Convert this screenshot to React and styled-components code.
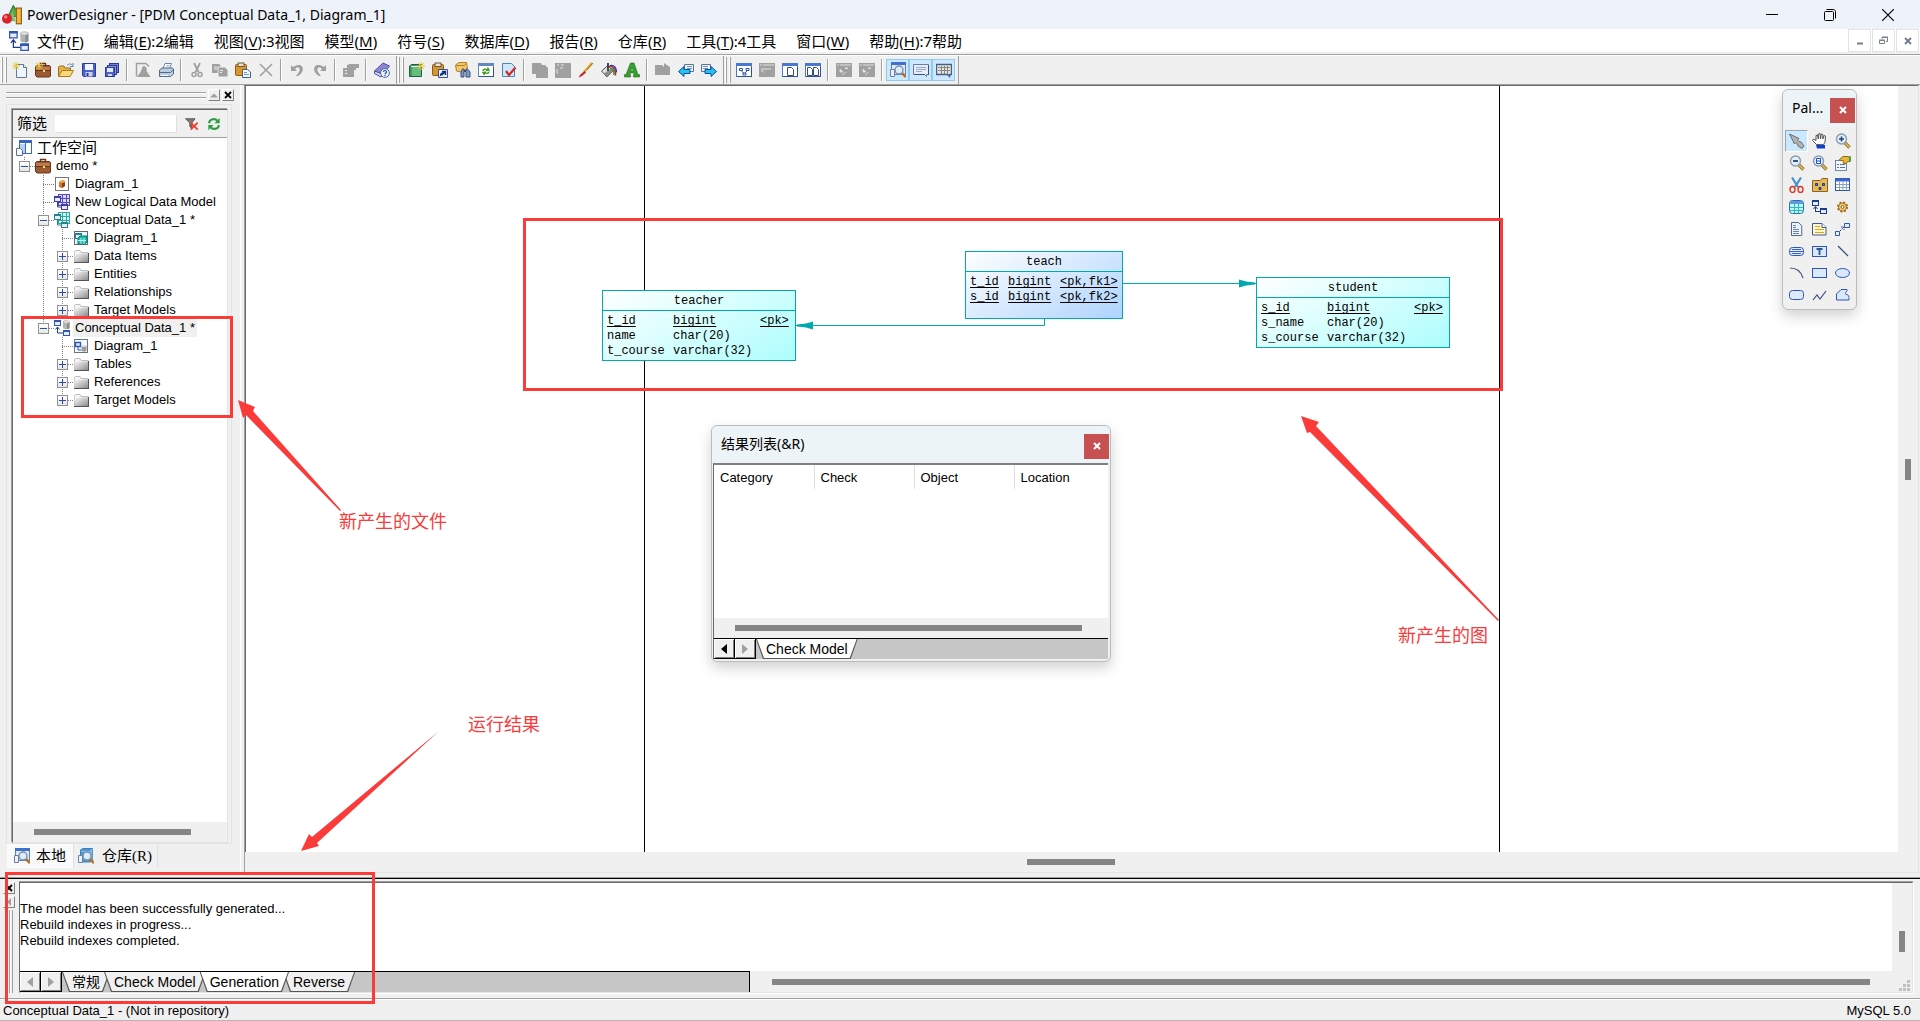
import React from 'react';
import styled, { createGlobalStyle, css } from 'styled-components';

const ARIAL = '"Liberation Sans", "Noto Sans CJK SC", sans-serif';
const SEGOE = '"Noto Sans", "Noto Sans CJK SC", sans-serif';
const SONG = '"Liberation Serif", "Noto Sans CJK SC", serif';
const MONO = '"Liberation Mono", "Noto Sans CJK SC", monospace';

/* ---------- icons ---------- */

const G = '#a0a0a0';
const B = '#2f55b5';
const N = '#1d3c8f';

const star = (
  <path d="M4 0v8M0 4h8M1 1l6 6M7 1l-6 6" stroke="#e8c53a" strokeWidth="1" />
);

const glass = (x, y) => (
  <>
    <path d={`M${x + 3} ${y + 3}l4 4`} stroke="#b5702c" strokeWidth="2.6" />
    <circle cx={x} cy={y} r="4" fill="#dcecfb" stroke="#7e8fa8" strokeWidth="1.4" />
  </>
);

const windowBox = (color = '#4a78d0') => (
  <>
    <rect x="0.5" y="1.5" width="15" height="13" fill="#fff" stroke={color} />
    <rect x="1" y="1" width="14" height="3" fill={color} />
    <path d="M1 14.5h15M15.5 5v10" stroke="#33528f" />
  </>
);

const page = (
  <>
    <path d="M4.5 2.5h7l3 3v10h-10z" fill="#eef5fc" stroke="#5f7893" />
    <path d="M11.5 2.5v3h3" fill="#fff" stroke="#5f7893" />
  </>
);

const clipboard = (
  <>
    <rect x="0.5" y="2.5" width="11" height="11" rx="1" fill="#d9962c" stroke="#8c5a1b" />
    <rect x="3" y="1" width="6" height="3.5" fill="#e9e2d0" stroke="#6f5a3a" />
  </>
);

const briefcase = (
  <>
    <path d="M5.5 4V1.5h5V4" fill="none" stroke="#6d3414" strokeWidth="1.4" />
    <path d="M0.5 4.5L2 3.5h12.5l1 1V14l-1 1H2l-1.5-1.5z" fill="#9c5a32" stroke="#6a3517" />
    <path d="M1 8.5h14" stroke="#6a3517" />
    <path d="M1 5h14v3H1z" fill="#b97a4c" />
    <rect x="8" y="8" width="2" height="2" fill="#f0d66c" />
  </>
);

const smallBox = (x, y, c) => (
  <>
    <rect x={x + 0.5} y={y + 0.5} width="6" height="5" fill="#e4eeff" stroke={c} />
    <path d={`M${x} ${y + 1}h7`} stroke={c} strokeWidth="2" />
  </>
);

const lens = (
  <>
    <path d="M9.5 9.5l5 5" stroke="#7d6428" strokeWidth="3.2" />
    <path d="M9.5 9.5l5 5" stroke="#d9b04c" strokeWidth="2" />
    <circle cx="6.5" cy="6" r="5" fill="#e2effc" stroke="#8b9bb0" strokeWidth="1.4" />
  </>
);

const ICONS = {
  app: (
    <>
      <path d="M9 0.5L14.5 9H5z" fill="#58a84a" stroke="#357f2e" />
      <rect x="11.5" y="2.5" width="4" height="12.5" fill="#f6b63a" stroke="#93641a" />
      <path d="M8 4l3 9H7z" fill="#7cc36b" />
      <circle cx="4" cy="11" r="4" fill="#d8232a" />
      <circle cx="3" cy="9.5" r="1.3" fill="#f58a86" />
    </>
  ),
  pdm: (
    <>
      {smallBox(0, 0, B)}
      {smallBox(9, 10, B)}
      <path d="M9 2v6c0 1.5 6.500 1.500 6.500 0V2z" fill="#b4b4b4" />
      <path d="M13 2v7c1 0 2.500-.4 2.500-1V2z" fill="#8b8b8b" />
      <ellipse cx="12.200" cy="2" rx="3.200" ry="1.400" fill="#e2e2e2" stroke="#999" strokeWidth="0.500" />
      <path d="M3.500 7v6H9M1.500 9.500l2-2.500 2 2.500" fill="none" stroke={N} />
    </>
  ),
  newFile: <>{page}{star}</>,
  newProject: <>{briefcase}{star}</>,
  open: (
    <>
      <path d="M0.500 14.500V5l1-1H6l1 2h5.500v2" fill="#e6b44a" stroke="#9a6d18" />
      <path d="M0.500 14.500L4 8.500h11.500l-3.500 6z" fill="#fbd87d" stroke="#a97b20" />
      <path d="M9 3.500c2-2 4-2 5.500 0M15 1v3.500h-3" fill="none" stroke="#5a84b8" />
    </>
  ),
  save: (
    <>
      <path d="M1.500 1.500h13v13h-12l-1-1z" fill="#4f63c6" stroke="#2c3b97" />
      <rect x="4" y="2" width="8" height="6" fill="#f1f5ff" />
      <rect x="4.500" y="10" width="7" height="4.500" fill="#c9d3ee" />
      <rect x="5.500" y="11" width="2" height="3" fill="#2c3b97" />
    </>
  ),
  saveAll: (
    <>
      <rect x="5.500" y="1.500" width="9" height="9" fill="#7280cf" stroke="#2c3b97" />
      <rect x="3.500" y="3.500" width="9" height="9" fill="#8b96dc" stroke="#2c3b97" />
      <rect x="1.500" y="5.500" width="9" height="9" fill="#4f63c6" stroke="#2c3b97" />
      <rect x="3" y="6" width="6" height="4" fill="#dfe6ff" />
      <rect x="4" y="12" width="4" height="2" fill="#c9d3ee" />
    </>
  ),
  preview: (
    <>
      <path d="M1.500 14.500V1.500h9.500l3 3" fill="none" stroke={G} strokeWidth="1.500" />
      <path d="M8 4a3.500 3.500 0 013.500 5l4 6H2l3.500-5z" fill={G} />
    </>
  ),
  print: (
    <>
      <path d="M5 6.500L7 1.500h6.500l-2 5z" fill="#fff" stroke="#6d89a8" />
      <path d="M1.500 8L4 6h10.500l1 1v5l-3 2.500h-11z" fill="#b9cce0" stroke="#4f6b8c" />
      <path d="M2 10.500h10.500L15 8" fill="none" stroke="#4f6b8c" />
      <path d="M3 13.500h7" stroke="#fff" />
      <path d="M8.500 3.500h3M8 5h3" stroke="#8aa3bf" strokeWidth="0.700" />
    </>
  ),
  cutGrey: (
    <>
      <path d="M5 1l4.500 9M11 1L6.500 10" stroke={G} strokeWidth="1.800" />
      <circle cx="5" cy="12.500" r="2" fill="none" stroke={G} strokeWidth="1.500" />
      <circle cx="11" cy="12.500" r="2" fill="none" stroke={G} strokeWidth="1.500" />
    </>
  ),
  copyGrey: (
    <>
      <path d="M0 2h7l2 2v7H0z" fill={G} />
      <path d="M6 5h7l3 3v7H6z" fill={G} stroke="#f0f0f0" />
      <path d="M2 5h3M2 7h3M8 8.500h3M8 10.500h2" stroke="#f0f0f0" />
    </>
  ),
  paste: (
    <>
      {clipboard}
      <path d="M7.500 7.500h5l3 2.500v5.500h-8z" fill="#f2f7fd" stroke="#44648c" />
      <path d="M9 10.500h3M9 12.500h5" stroke="#7c97b8" />
    </>
  ),
  delGrey: <path d="M2 2l12 12M14 2L2 14" stroke={G} strokeWidth="1.600" />,
  undo: <path d="M2 3v6h6L6 7c3-3 6-1 4 3l-3 4h2c7-4 6-12 0-11-2 0-3 1-5 2z" fill={G} />,
  redo: <path d="M14 3v6H8l2-2C7 4 4 6 6 10l3 4H7C0 10 1 2 7 3c2 0 3 1 5 2z" fill={G} />,
  propsGrey: (
    <>
      <path d="M0 6h4V3l3-1h9v4h-3v2h-2v7H0z" fill={G} />
      <path d="M2 8.500h2M2 11.500h2" stroke="#f0f0f0" />
    </>
  ),
  help: (
    <>
      <path d="M0.500 9L9 1l6.500 3L8 12z" fill="#8d86cf" stroke="#554b9e" />
      <path d="M0.500 9v2.500L7 15l1-3z" fill="#dcd8f2" stroke="#554b9e" />
      <circle cx="11" cy="11" r="4.400" fill="#f3f7ff" stroke="#4169b8" />
      <path d="M9.500 10c0-2 3-2 3 0 0 1-1.500 1-1.500 2.200M11 13v1" fill="none" stroke="#26488f" strokeWidth="1.200" />
    </>
  ),
  newModel: (
    <>
      <path d="M0.500 4l2-1.500h10V14.500h-12z" fill="#3f9b5c" stroke="#245f3d" />
      <rect x="3" y="5" width="9" height="9" fill="#67bd7c" />
      <path d="M2 4.500h10" stroke="#e8f5ea" />
      <g transform="translate(8 0)">{star}</g>
    </>
  ),
  pasteLink: (
    <>
      {clipboard}
      <path d="M6.500 7.500h9v8h-9z" fill="#eaf1fb" stroke="#35548f" />
      <path d="M8.500 14c0-2 1-3 3-3M10 9.500h3.500V13M13.500 9.500L10 13" fill="none" stroke="#142f7a" strokeWidth="1.400" />
    </>
  ),
  find: (
    <>
      <path d="M0.500 3L4 0.500h7.500l1 6-4 4-7-1.500z" fill="#f2c763" stroke="#b28327" />
      <path d="M1 3.500h8l3-2.500" fill="none" stroke="#b28327" />
      <path d="M6 15V10l1.500-3H9v8zM11 15V7h1.500L15 10v5z" fill="#7f98c0" stroke="#35507f" />
      <path d="M9 9h2" stroke="#35507f" strokeWidth="2" />
    </>
  ),
  refreshWin: (
    <>
      {windowBox('#5f8ac0')}
      <path d="M5 9c0-2 3-2.500 5-1M11 9.500c0 2-3 2.500-5 1M9.500 5.500l1.500 2.500-3 .5M6.500 13L5 10.500l3-.5" fill="none" stroke="#3f9a22" strokeWidth="1.400" />
    </>
  ),
  check: (
    <>
      <path d="M1.500 1.500h9l3 3v10h-12z" fill="#cfe7f8" stroke="#4b86b5" />
      <path d="M5 9l3 4L14.500 5.500" fill="none" stroke="#cf2a2a" strokeWidth="2.200" />
    </>
  ),
  grey1: <path d="M0 1h9l1 2h3l3 3v10H4v-4H0z" fill={G} />,
  grey2: (
    <>
      <path d="M0 1h16v15H0z" fill={G} />
      <path d="M2 3h2M2 7v4h1M5 6h3M6 3h3" fill="none" stroke="#e2e2e2" />
    </>
  ),
  brush: (
    <>
      <path d="M14 1L6 10" stroke="#e4a72d" strokeWidth="2.200" />
      <path d="M15 1l-6 7" stroke="#8b5c12" strokeWidth="0.800" />
      <path d="M6.500 9L2 13l-1.500 2.500L4 14l4-3.500z" fill="#c1221d" />
    </>
  ),
  bucket: (
    <>
      <path d="M0.500 9L7 3.500 12 9l-6 6z" fill="#e0e0e0" stroke="#555" />
      <path d="M3 11.500l7-5L12 9l-6 6z" fill="#8d8d8d" />
      <path d="M7 9V1" stroke="#223" strokeWidth="1.600" />
      <path d="M8 4.500c4-1 6.500 2 6.500 9" fill="none" stroke="#d92020" strokeWidth="1.600" />
      <path d="M9 6c3 0 4 3 4 7" fill="none" stroke="#2aa12a" strokeWidth="1.400" />
      <path d="M9 3.500c4-1 6.500 2 6.500 7" fill="none" stroke="#2434d8" strokeWidth="1.200" />
    </>
  ),
  fontA: (
    <path
      d="M6.500 1h3.500l4 11.500h1.500V15h-6v-2.500h1l-.5-1.500H6l-.5 1.500h1V15H.5v-2.500H2zM8 5.500L6.800 9h2.600z"
      fill="#35a02c"
      stroke="#1e6b1a"
      strokeWidth="0.600"
      fillRule="evenodd"
    />
  ),
  greyFolder: <path d="M0 3h7l2 2V1l6 4v8H0z" fill={G} />,
  back: (
    <>
      <path d="M6.500 2.500h9v7h-9z" fill="#eef4fc" stroke="#5b7396" />
      <path d="M9 4.500h5M9 6.500h5" stroke="#7c94b4" />
      <path d="M0.500 9.500L6 4.500V7.500h6v4H6v3z" fill="#22c4ee" stroke="#0a4fa8" />
    </>
  ),
  forward: (
    <>
      <path d="M0.500 2.500h9v7h-9z" fill="#eef4fc" stroke="#5b7396" />
      <path d="M2 4.500h5M2 6.500h5" stroke="#7c94b4" />
      <path d="M15.500 9.500L10 4.500V7.500H4v4h6v3z" fill="#22c4ee" stroke="#0a4fa8" />
    </>
  ),
  winDiagram: (
    <>
      {windowBox()}
      <path d="M3.500 6.500h3v2h-3zM10 6.500h3v2h-3zM7 11h3v2H7zM5 8.500l3 3M11.500 8.500L9 11" fill="none" stroke={B} />
    </>
  ),
  greyWin: (
    <>
      <path d="M0 1h16v14H0z" fill={G} />
      <path d="M1 3h2M4 3h11M3 6v4M4 7h8M4 10h1" stroke="#e2e2e2" />
    </>
  ),
  winPage: <>{windowBox()}<path d="M5.500 5.500h4l2 2v6h-6z" fill="#fff" stroke="#344f7c" /></>,
  winPages: (
    <>
      {windowBox()}
      <path d="M2.500 5.500h3l2 2v6h-5zM8.500 5.500h3l2 2v6h-5z" fill="#fff" stroke="#344f7c" />
    </>
  ),
  greyExp: (
    <>
      <path d="M0 1h16v14H0z" fill={G} />
      <path d="M1 3h2M4 3h11" stroke="#e2e2e2" />
      <path d="M4 7v3h3zM12 6h-3l2 1zM6 13l4-3" fill="#e2e2e2" stroke="#e2e2e2" strokeWidth="0.800" />
    </>
  ),
  browser: (
    <>
      <rect x="1.500" y="0.500" width="14" height="12" fill="#dfeaf9" stroke="#5c80c0" />
      <rect x="1" y="0" width="15" height="3" fill="#3f6fd0" />
      {glass(9, 8)}
      <path d="M0.500 7.500h4v7h-4z" fill="#eaf1fb" stroke="#6a81a0" />
    </>
  ),
  output: (
    <>
      <path d="M0.500 2.500h15v10h-2v2l-2-2h-11z" fill="#e6edf8" stroke="#6b7ea2" />
      <path d="M3 5.500h10M3 7.500h10M3 9.500h6" stroke="#9aaac4" />
      <path d="M1 12.500h11M15.500 3v10" stroke="#3f5379" />
    </>
  ),
  grid: (
    <>
      <path d="M0.500 2.500h15v10h-2v2l-2-2h-11z" fill="#e6e4dc" stroke="#4a5f88" strokeWidth="1.400" />
      <path d="M2 5.500h12M2 8.500h12M5.500 4v8M8.500 4v8M11.500 4v8" stroke="#858585" />
    </>
  ),
  funnel: (
    <>
      <path d="M0.500 2h11L8 6.500V13L5.500 11V6.500z" fill="#7d7d7d" stroke="#4f4f4f" />
      <path d="M6.500 6.500l8 8M14.500 6.500l-8 8" stroke="#f0432a" strokeWidth="2.200" />
    </>
  ),
  refresh: (
    <>
      <path d="M2.500 7c0-5 7-6 9.500-2.500M13.500 9c0 5-7 6-9.500 2.500" fill="none" stroke="#2f9b45" strokeWidth="2.400" />
      <path d="M14.500 1v6h-6zM1.500 15V9h6z" fill="#2f9b45" />
    </>
  ),
  workspace: (
    <>
      <rect x="3.500" y="0.500" width="12" height="13" fill="#fff" stroke="#3566c8" />
      <path d="M3 1.500h13" stroke="#3566c8" strokeWidth="3" />
      <path d="M9.500 3v10" stroke="#3566c8" />
      <path d="M4 4h5v9H4z" fill="#b9d0f5" />
      <path d="M0.500 8.500h4l2 2v5h-6z" fill="#f7f9fc" stroke="#5e708c" />
    </>
  ),
  project: briefcase,
  projDiagram: (
    <>
      <rect x="1.500" y="1.500" width="13" height="13" fill="#fff" stroke="#777" />
      <path d="M5 6l3-2 3 1v5l-3 2-3-1z" fill="#d8742a" />
      <path d="M8 7h3v3l-3 2z" fill="#8a4316" />
      <path d="M5 6l3-2 3 1-3 2z" fill="#f3ab4a" />
    </>
  ),
  ldm: (
    <>
      <rect x="4.500" y="0.500" width="11" height="11" fill="#dcd9f8" stroke="#5549c0" />
      <path d="M8.500 0v12M12.500 0v12M4 4.500h12M4 8.500h12" stroke="#5549c0" />
      {smallBox(0, 2, '#4338a8')}
      {smallBox(7, 10, '#4338a8')}
      <path d="M3.500 8v5H7" fill="none" stroke="#4338a8" />
    </>
  ),
  cdm: (
    <>
      <rect x="4.500" y="0.500" width="11" height="11" fill="#d4f6f2" stroke="#2aa9a5" />
      <path d="M8.500 0v12M12.500 0v12M4 4.500h12M4 8.500h12" stroke="#2aa9a5" />
      {smallBox(0, 2, '#2b8288')}
      {smallBox(7, 10, '#2b8288')}
      <path d="M3.500 8v5H7" fill="none" stroke="#2b8288" />
    </>
  ),
  cdmDiagram: (
    <>
      <rect x="1.500" y="1.500" width="13" height="13" fill="#e7f8f8" stroke="#667" />
      {smallBox(2, 3, '#2b8288')}
      <path d="M5 8l2-2h7v6l-2 2H5z" fill="#19bdb4" stroke="#0c7772" />
      <path d="M5 10.500h8M8 8v6M11 8v6" stroke="#bff4ee" />
    </>
  ),
  folder: (
    <>
      <path d="M1.500 13.500V3.500l1-1H7l1 2h7v9z" fill="#f4f4f4" stroke="#bdbdbd" />
      <path d="M1.500 14V5.500h14V14z" fill="url(#folderShade)" />
      <path d="M1 14.500h15M15.500 5v10" stroke="#555" />
    </>
  ),
  pdmDiagram: (
    <>
      <rect x="1.500" y="1.500" width="13" height="13" fill="#f6f9fd" stroke="#677" />
      <rect x="2.500" y="4.500" width="5" height="4" fill="#dbe6fb" stroke={B} strokeWidth="1.400" />
      <path d="M5 8.500V12h3" fill="none" stroke={B} />
      <path d="M8.500 8v4.500c0 1.500 5 1.500 5 0V8z" fill="#9c9c9c" />
      <ellipse cx="11" cy="8" rx="2.500" ry="1" fill="#ddd" />
    </>
  ),
  repo: (
    <>
      <path d="M2.500 2L5 0.500h9.500V12l-2 2h-10z" fill="#4c96cf" stroke="#3a80b8" />
      <path d="M13.500 1v12" stroke="#7db8e2" strokeWidth="2" />
      <path d="M3 3.500h10" stroke="#8cc0e8" />
      {glass(9, 8)}
      <path d="M0.500 7.500h4v7h-4z" fill="#eaf1fb" stroke="#6a81a0" />
    </>
  ),
  pointer: <path d="M0.500 1L10 5.500 8.500 7l1.500 1.500 2 .5 3 4-2 2.500-4-2.500-.5-2L7 9.500 5.500 11z" fill="#b4b4b4" stroke="#6b6b6b" />,
  hand: (
    <>
      <path d="M4.500 11.500L0.500 7.500l1-1.500L4 7.500V2.500L5.500 2l.8 4V1L8 .5 8.500 6l.8-5 1.500.5v4.500l1.200-3.500 1.500.7-.5 6-1.500 2.500z" fill="#fff" stroke="#444" strokeWidth="0.900" />
      <path d="M4 12h9v3.500H5z" fill="#0a3fd0" />
    </>
  ),
  zoomIn: <>{lens}<path d="M4 6h5M6.500 3.500v5" stroke="#24406e" strokeWidth="1.600" /></>,
  zoomOut: <>{lens}<path d="M4 6h5" stroke="#24406e" strokeWidth="1.800" /></>,
  zoomFit: <>{lens}<path d="M4.500 3.500h4v5h-4zM4.500 6h4" fill="#fff" stroke="#2050c8" /></>,
  props: (
    <>
      <rect x="0.500" y="5.500" width="11" height="10" fill="#f3f7fc" stroke="#7186a5" />
      <path d="M2 9.500h2M5 9.500h5M2 12.500h2M5 12.500h5" stroke="#5473a8" />
      <path d="M4 5l4-3.500h5l3 1V6l-4 1-2 2-2-1 1-2z" fill="#e5b93a" stroke="#8e6b14" />
      <path d="M14 1.500h2V6h-2z" fill="#3f9c48" />
    </>
  ),
  scissors: (
    <>
      <path d="M3 0.500l6 9.500M12 0.500L6 10" stroke="#3f94d4" strokeWidth="2.200" />
      <ellipse cx="3.500" cy="12.500" rx="2.500" ry="3" fill="none" stroke="#e0331f" strokeWidth="1.400" />
      <ellipse cx="11.500" cy="12.500" rx="2.500" ry="3" fill="none" stroke="#e0331f" strokeWidth="1.400" />
    </>
  ),
  pkg: (
    <>
      <path d="M0.500 14.500V3.500h8l1.500-2h5.500v13z" fill="#e8b955" stroke="#8d6420" />
      <path d="M3.500 6.500h2v2h-2zM10.500 6.500h2v2h-2zM7 10.500h2v2H7z" fill="#4a7de0" stroke={N} />
    </>
  ),
  table: (
    <>
      <rect x="0.500" y="1.500" width="14" height="12" fill="#fff" stroke={B} />
      <path d="M1 3h13" stroke="#3b66cc" strokeWidth="3" />
      <path d="M1 7.500h13M1 10.500h13M4.500 5v8M8 5v8M11.500 5v8" stroke="#8aa2c8" />
    </>
  ),
  view: (
    <>
      <rect x="0.500" y="1.500" width="14" height="13" rx="3" fill="#b9fbf7" stroke="#2b6fae" />
      <path d="M1 5V4c0-1 1-2 2-2h9c1 0 2 1 2 2v1z" fill="#5f97dd" />
      <path d="M1 8.500h13M1 11.500h13M5.500 5v9M9.500 5v9" stroke="#36b3bb" />
    </>
  ),
  reference: (
    <>
      {smallBox(0, 1, N)}
      {smallBox(8, 9, N)}
      <path d="M3.500 13V8M1.500 10l2-2.500 2 2.500M3.500 12.500H8" fill="none" stroke={N} />
    </>
  ),
  gear: (
    <>
      <circle cx="7.500" cy="8" r="4.700" fill="none" stroke="#a06b1c" strokeWidth="1.800" strokeDasharray="2 1.700" />
      <circle cx="7.500" cy="8" r="4" fill="#f6cf7e" stroke="#a06b1c" strokeWidth="1" />
      <circle cx="7.500" cy="8" r="1.500" fill="#fff" stroke="#8a5a14" />
    </>
  ),
  file: (
    <>
      <path d="M2.500 1.500h7l3 3v10h-10z" fill="#eef4fb" stroke="#546a86" />
      <path d="M4 4.500h3M4 6.500h3M4 8.500h6M4 10.500h6M4 12.500h6" stroke="#6a83a5" />
      <path d="M13 5v10" stroke="#9fb2c8" />
    </>
  ),
  note: (
    <>
      <path d="M0.500 2.500h9.500l4 4v7.500H0.500z" fill="#fff6c8" stroke="#3e5a9e" />
      <path d="M10 2.500v4h4" fill="#fff" stroke="#3e5a9e" />
      <path d="M3 5.500h5M3 8.500h9M3 11.500h9" stroke="#d9a72e" />
    </>
  ),
  link: (
    <>
      <path d="M0.500 10.500h4v4h-4zM9.500 2.500h5v4h-5z" fill="#e9f1ff" stroke={B} />
      <path d="M5 10l4-4M6 6h3v3" fill="none" stroke={N} strokeDasharray="1.500 1" />
    </>
  ),
  title: (
    <>
      <rect x="0.500" y="4.500" width="14" height="8" rx="3" fill="#dfeafd" stroke={B} />
      <path d="M3 6.500h9M1 8.500h13M3 10.500h9" stroke="#3c62b4" />
    </>
  ),
  text: (
    <>
      <rect x="0.500" y="3.500" width="14" height="10" fill="#dbe9fd" stroke={B} />
      <path d="M4.500 6h6M7.500 6v6" stroke="#2d5490" strokeWidth="1.800" />
    </>
  ),
  line: <path d="M3 3l10 10" stroke="#3a4f7c" strokeWidth="1.200" />,
  arc: <path d="M1 3c7 0 11 3 13 10" fill="none" stroke="#3a4f7c" strokeWidth="1.200" />,
  rect: <rect x="0.500" y="3.500" width="14" height="9" fill="#dbe9fd" stroke={B} />,
  ellipse: <ellipse cx="7.500" cy="8" rx="7" ry="4.500" fill="#dbe9fd" stroke={B} />,
  rounded: <rect x="0.500" y="3.500" width="14" height="9" rx="3" fill="#dbe9fd" stroke={B} />,
  polyline: <path d="M1 13l4-5 3 4 6-8" fill="none" stroke="#3a4f7c" strokeWidth="1.200" />,
  polygon: <path d="M1.500 7L6 2.500h6c1 2-3 3-1 5 3 0 3 2 3 5.500H1.500z" fill="#dbe9fd" stroke={B} />,
};

function Icon({ name, size = 16 }) {
  return (
    <IconSvg width={size} height={size} viewBox="0 0 16 16" aria-hidden="true">
      {ICONS[name]}
    </IconSvg>
  );
}

/* ---------- data ---------- */

const MENU = [
  ['文件', 'F', ''],
  ['编辑', 'E', ':2编辑'],
  ['视图', 'V', ':3视图'],
  ['模型', 'M', ''],
  ['符号', 'S', ''],
  ['数据库', 'D', ''],
  ['报告', 'R', ''],
  ['仓库', 'R', ''],
  ['工具', 'T', ':4工具'],
  ['窗口', 'W', ''],
  ['帮助', 'H', ':7帮助'],
];

const TOOLBARS = [
  ['newFile', 'newProject', 'open', 'save', 'saveAll', '|', 'preview', 'print', '|', 'cutGrey', 'copyGrey', 'paste', 'delGrey', '|', 'undo', 'redo', '|', 'propsGrey', '|', 'help'],
  ['newModel', 'pasteLink', 'find', 'refreshWin', 'check', '|', 'grey1', 'grey2', 'brush', 'bucket', 'fontA', '|', 'greyFolder', 'back', 'forward'],
  ['winDiagram', 'greyWin', 'winPage', 'winPages', '|', 'greyExp', 'greyExp', '|', 'browser', 'output', 'grid'],
];

const TOGGLED = ['browser', 'output', 'grid'];

// guides: v = line through, t = branch, e = last branch, . = empty
const TREE = [
  { guides: 'e', box: '-', icon: 'project', label: 'demo *' },
  { guides: '.t', icon: 'projDiagram', label: 'Diagram_1' },
  { guides: '.t', icon: 'ldm', label: 'New Logical Data Model' },
  { guides: '.t', box: '-', icon: 'cdm', label: 'Conceptual Data_1 *' },
  { guides: '.vt', icon: 'cdmDiagram', label: 'Diagram_1' },
  { guides: '.vt', box: '+', icon: 'folder', label: 'Data Items' },
  { guides: '.vt', box: '+', icon: 'folder', label: 'Entities' },
  { guides: '.vt', box: '+', icon: 'folder', label: 'Relationships' },
  { guides: '.ve', box: '+', icon: 'folder', label: 'Target Models' },
  { guides: '.e', box: '-', icon: 'pdm', label: 'Conceptual Data_1 *', selected: true },
  { guides: '..t', icon: 'pdmDiagram', label: 'Diagram_1' },
  { guides: '..t', box: '+', icon: 'folder', label: 'Tables' },
  { guides: '..t', box: '+', icon: 'folder', label: 'References' },
  { guides: '..e', box: '+', icon: 'folder', label: 'Target Models' },
];

const ENTITIES = [
  {
    name: 'teacher', x: 356, y: 204, width: 194, height: 71, cols: [66, 87], to: '#adfdfd',
    rows: [['t_id', 'bigint', '<pk>'], ['name', 'char(20)', ''], ['t_course', 'varchar(32)', '']],
  },
  {
    name: 'teach', x: 719, y: 165, width: 158, height: 68, cols: [38, 52], to: '#aed3fd',
    rows: [['t_id', 'bigint', '<pk,fk1>'], ['s_id', 'bigint', '<pk,fk2>']],
  },
  {
    name: 'student', x: 1010, y: 191, width: 194, height: 71, cols: [66, 87], to: '#adfdfd',
    rows: [['s_id', 'bigint', '<pk>'], ['s_name', 'char(20)', ''], ['s_course', 'varchar(32)', '']],
  },
];

const PALETTE = [
  'pointer', 'hand', 'zoomIn', 'zoomOut', 'zoomFit', 'props', 'scissors', 'pkg', 'table',
  'view', 'reference', 'gear', 'file', 'note', 'link', 'title', 'text', 'line',
  'arc', 'rect', 'ellipse', 'rounded', 'polyline', 'polygon',
];

/* ---------- parts ---------- */

function TitleBar() {
  return (
    <TitleRow>
      <Icon name="app" size={20} />
      <Title>PowerDesigner - [PDM Conceptual Data_1, Diagram_1]</Title>
      <CaptionButton aria-label="Minimize">
        <svg width="12" height="12"><path d="M0 5.500h12" stroke="#000" /></svg>
      </CaptionButton>
      <CaptionButton aria-label="Restore">
        <svg width="12" height="12" fill="none" stroke="#000">
          <rect x="0.500" y="2.500" width="9" height="9" rx="1" />
          <path d="M2.500 0.500h7c1 0 2 1 2 2v7" />
        </svg>
      </CaptionButton>
      <CaptionButton aria-label="Close">
        <svg width="12" height="12"><path d="M0 0l12 12M12 0L0 12" stroke="#000" strokeWidth="1.200" /></svg>
      </CaptionButton>
    </TitleRow>
  );
}

function MenuBar() {
  return (
    <MenuRow>
      <Icon name="pdm" size={20} />
      <MenuItems>
        {MENU.map(([label, key, rest]) => (
          <MenuItem key={label}>
            {label}(<u>{key}</u>){rest}
          </MenuItem>
        ))}
      </MenuItems>
      <ChildButton aria-label="Minimize diagram">
        <svg width="8" height="9"><path d="M1 7.500h6" stroke="#74808f" strokeWidth="2" /></svg>
      </ChildButton>
      <ChildButton aria-label="Restore diagram">
        <svg width="9" height="9" fill="none" stroke="#74808f">
          <path d="M0.500 4.500h5v3h-5zM0 4h6" />
          <path d="M3 3V1.500h5.500v4H7M3 1h6" />
        </svg>
      </ChildButton>
      <ChildButton aria-label="Close diagram">
        <svg width="8" height="8"><path d="M1 1l6 6M7 1L1 7" stroke="#74808f" strokeWidth="2" /></svg>
      </ChildButton>
    </MenuRow>
  );
}

function Toolbars() {
  return (
    <ToolbarRow>
      {TOOLBARS.map((items, i) => (
        <ToolGroup key={i}>
          <Grip />
          {items.map((name, j) =>
            name === '|' ? (
              <ToolSeparator key={j} />
            ) : (
              <ToolButton key={j} aria-label={name} $on={TOGGLED.includes(name)}>
                <Icon name={name} />
              </ToolButton>
            )
          )}
        </ToolGroup>
      ))}
    </ToolbarRow>
  );
}

function Sidebar() {
  return (
    <SidePanel>
      <DockHeader>
        <DockGrip />
        <DockButton aria-label="Collapse">
          <svg width="8" height="8"><path d="M0 6.500L4 2.500l4 4z" fill="#a0a0a0" /></svg>
        </DockButton>
        <DockButton aria-label="Close browser">
          <svg width="8" height="8"><path d="M1 1l6 6M7 1L1 7" stroke="#000" strokeWidth="1.800" /></svg>
        </DockButton>
      </DockHeader>
      <TreeOuter>
        <TreeInner>
          <FilterRow>
            <FilterLabel htmlFor="filter">筛选</FilterLabel>
            <FilterInput id="filter" type="text" />
            <FlatButton aria-label="Clear filter"><Icon name="funnel" size={14} /></FlatButton>
            <FlatButton aria-label="Refresh"><Icon name="refresh" size={14} /></FlatButton>
          </FilterRow>
          <Tree>
            <TreeRow>
              <Icon name="workspace" />
              <TreeLabel $cjk>工作空间</TreeLabel>
            </TreeRow>
            {TREE.map((node, i) => (
              <TreeRow key={i}>
                {node.guides.split('').map((g, j) => (
                  <Guide key={j} $kind={g}>
                    {node.box && j === node.guides.length - 1 && (
                      <ExpandBox $plus={node.box === '+'} aria-label={`Toggle ${node.label}`} />
                    )}
                  </Guide>
                ))}
                <Icon name={node.icon} />
                <TreeLabel $selected={node.selected}>{node.label}</TreeLabel>
              </TreeRow>
            ))}
          </Tree>
          <HScroll><SideThumb /></HScroll>
        </TreeInner>
      </TreeOuter>
      <SideTabs>
        <SideTab $active><Icon name="browser" />本地</SideTab>
        <SideTab><Icon name="repo" />仓库(R)</SideTab>
      </SideTabs>
    </SidePanel>
  );
}

function Entity({ entity }) {
  const [first, second] = entity.cols;
  return (
    <EntityBox style={{ left: entity.x, top: entity.y, width: entity.width, height: entity.height }} $to={entity.to}>
      <EntityName>{entity.name}</EntityName>
      <EntityTable>
        <colgroup>
          <col style={{ width: first }} />
          <col style={{ width: second }} />
          <col />
        </colgroup>
        <tbody>
          {entity.rows.map((row) => (
            <tr key={row[0]}>
              {row.map((cell, i) => (
                <EntityCell key={i} $key={row[2] !== ''}>{cell}</EntityCell>
              ))}
            </tr>
          ))}
        </tbody>
      </EntityTable>
    </EntityBox>
  );
}

function TabArrows({ enabled }) {
  return (
    <>
      <TabArrow aria-label="Previous tab">
        <svg width="8" height="10"><path d="M7 0v10L1 5z" fill={enabled ? '#000' : G} /></svg>
      </TabArrow>
      <TabArrow aria-label="Next tab">
        <svg width="8" height="10"><path d="M1 0v10l6-5z" fill={G} /></svg>
      </TabArrow>
    </>
  );
}

function ResultList() {
  return (
    <ResultWindow>
      <FloatTitle>
        <FloatCaption>结果列表(&amp;R)</FloatCaption>
        <CloseSquare aria-label="Close result list">
          <svg width="8" height="8"><path d="M1 1l6 6M7 1L1 7" stroke="#fff" strokeWidth="2" /></svg>
        </CloseSquare>
      </FloatTitle>
      <ResultBody>
        <ResultArea>
          <ResultTable>
            <thead>
              <tr>
                <th>Category</th>
                <th>Check</th>
                <th>Object</th>
                <th>Location</th>
              </tr>
            </thead>
          </ResultTable>
        </ResultArea>
        <HScroll><ResultThumb /></HScroll>
        <TabStrip>
          <TabArrows enabled />
          <SlantTab $active>Check Model</SlantTab>
        </TabStrip>
      </ResultBody>
    </ResultWindow>
  );
}

function Palette() {
  return (
    <PaletteWindow>
      <FloatTitle>
        <FloatCaption>Pal...</FloatCaption>
        <CloseSquare aria-label="Close palette">
          <svg width="8" height="8"><path d="M1 1l6 6M7 1L1 7" stroke="#fff" strokeWidth="2" /></svg>
        </CloseSquare>
      </FloatTitle>
      <PaletteGrid>
        {PALETTE.map((name, i) => (
          <PaletteButton key={name} aria-label={name} $on={i === 0}>
            <Icon name={name} />
          </PaletteButton>
        ))}
      </PaletteGrid>
    </PaletteWindow>
  );
}

function Diagram() {
  return (
    <CanvasFrame>
      <Canvas>
        <PageLine $x={398} />
        <PageLine $x={1253} />
        <Links width="1300" height="300">
          <path d="M877 197.500H1010M798.500 232v7.500H550" fill="none" stroke="#00a9ad" />
          <path d="M993 193.500l7 2 9 1v2l-9 1-7 2zM567 235.500l-7 2-9 1v2l9 1 7 2z" fill="#00a9ad" />
        </Links>
        {ENTITIES.map((entity) => (
          <Entity key={entity.name} entity={entity} />
        ))}
        <ResultList />
        <Palette />
      </Canvas>
      <VScroll><CanvasVThumb /></VScroll>
      <HScroll><CanvasHThumb /></HScroll>
      <Corner />
    </CanvasFrame>
  );
}

function OutputPanel() {
  return (
    <OutputDock>
      <OutputGrip>
        <DockButton aria-label="Close output">
          <svg width="8" height="8"><path d="M1 1l6 6M7 1L1 7" stroke="#000" strokeWidth="1.800" /></svg>
        </DockButton>
        <DockButton aria-label="Collapse output">
          <svg width="8" height="8"><path d="M6 0L2 4l4 4z" fill="#a0a0a0" /></svg>
        </DockButton>
        <OutputRails />
      </OutputGrip>
      <OutputFrame>
        <OutputText>
          <p>The model has been successfully generated...</p>
          <p>Rebuild indexes in progress...</p>
          <p>Rebuild indexes completed.</p>
        </OutputText>
        <VScroll><OutputVThumb /></VScroll>
        <OutputBottom>
          <OutputTabs>
            <TabArrows />
            <SlantTab>常规</SlantTab>
            <SlantTab>Check Model</SlantTab>
            <SlantTab $active>Generation</SlantTab>
            <SlantTab>Reverse</SlantTab>
          </OutputTabs>
          <OutputHTrack><OutputHThumb /></OutputHTrack>
        </OutputBottom>
        <Corner>
          <svg width="11" height="11" fill="#bfbfbf">
            <path d="M8 0h3v3H8zM4 4h3v3H4zM8 4h3v3H8zM0 8h3v3H0zM4 8h3v3H4zM8 8h3v3H8z" />
          </svg>
        </Corner>
      </OutputFrame>
    </OutputDock>
  );
}

function Annotations() {
  return (
    <Overlay>
      <svg width="100%" height="100%" fill="#fb3a3a">
        <path d="M238 400l17 7-2 4 88 99-1 1-94-96-3 3z" />
        <path d="M301 851l8-17 3 3 127-106-122 112 2 3z" />
        <path d="M1301 416l18 6-3 4 183 194-1 1-188-189-3 1z" />
      </svg>
      <RedBox $x={523} $y={218} $w={980} $h={173} />
      <RedBox $x={21} $y={316} $w={212} $h={102} />
      <RedBox $x={5} $y={872} $w={370} $h={132} />
      <RedNote $x={339} $y={508}>新产生的文件</RedNote>
      <RedNote $x={468} $y={711}>运行结果</RedNote>
      <RedNote $x={1398} $y={622}>新产生的图</RedNote>
    </Overlay>
  );
}

function App() {
  return (
    <>
      <GlobalStyle />
      <Shell>
        <IconDefs width="0" height="0">
          <linearGradient id="folderShade" x1="0" y1="0" x2="1" y2="1">
            <stop offset="0" stopColor="#fafafa" />
            <stop offset="1" stopColor="#8a8a8a" />
          </linearGradient>
        </IconDefs>
        <TitleBar />
        <MenuBar />
        <Toolbars />
        <Workspace>
          <Sidebar />
          <Diagram />
        </Workspace>
        <OutputPanel />
        <StatusBar>
          <span>Conceptual Data_1 - (Not in repository)</span>
          <span>MySQL 5.0</span>
        </StatusBar>
        <Annotations />
      </Shell>
    </>
  );
}

export default App;

/* ---------- styles ---------- */

const GlobalStyle = createGlobalStyle`
  * {
    box-sizing: border-box;
  }
  body {
    margin: 0;
    background: #f0f0f0;
    color: #000;
    font-family: ${ARIAL};
    font-size: 13px;
  }
  button {
    margin: 0;
    padding: 0;
    border: 0;
    background: none;
    color: inherit;
    font: inherit;
  }
  p {
    margin: 0;
  }
`;

const IconSvg = styled.svg`
  display: block;
  flex: none;
`;

const IconDefs = styled.svg`
  position: absolute;
`;

const Shell = styled.div`
  position: relative;
  display: flex;
  flex-direction: column;
  min-height: 100vh;
  background: #f0f0f0;
`;

const TitleRow = styled.header`
  display: flex;
  align-items: center;
  height: 29px;
  padding: 0 3px 0 2px;
  background: #eef3f9;
`;

const Title = styled.div`
  flex: 1;
  padding-left: 5px;
  font-family: ${SEGOE};
  font-size: 14px;
  white-space: nowrap;
`;

const CaptionButton = styled.button`
  display: flex;
  align-items: center;
  justify-content: center;
  width: 58px;
  height: 29px;
`;

const MenuRow = styled.nav`
  display: flex;
  align-items: center;
  height: 26px;
  padding: 0 1px 2px 9px;
  background: linear-gradient(#fff 0 23px, #f0f0f0 23px);
  border-bottom: 1px solid #a0a0a0;
`;

const MenuItems = styled.div`
  display: flex;
  flex: 1;
  gap: 20px;
  padding-left: 8px;
`;

const MenuItem = styled.button`
  font-family: ${SEGOE};
  font-size: 15px;
  line-height: 22px;
  white-space: nowrap;

  u {
    text-underline-offset: 2px;
  }
`;

const ChildButton = styled.button`
  display: flex;
  align-items: center;
  justify-content: center;
  width: 23px;
  height: 23px;
  margin-left: 1px;
  border: 1px solid #e3e3e3;
  background: #fff;
`;

const ToolbarRow = styled.div`
  display: flex;
  height: 30px;
  border-top: 1px solid #fff;
  border-bottom: 1px solid #a0a0a0;
`;

const ToolGroup = styled.div`
  display: flex;
  align-items: center;
  padding-right: 3px;
  border-right: 1px solid #a0a0a0;
`;

const Grip = styled.div`
  width: 8px;
  height: 26px;
  background:
    linear-gradient(90deg, #fff 1px, #a0a0a0 1px) 1px 0 / 2px 100% no-repeat,
    linear-gradient(90deg, #fff 1px, #a0a0a0 1px) 5px 0 / 2px 100% no-repeat;
`;

const ToolButton = styled.button`
  display: flex;
  align-items: center;
  justify-content: center;
  width: 23px;
  height: 22px;
  ${({ $on }) =>
    $on &&
    css`
      background: #cce8ff;
      border: 1px solid #90c8f6;
    `}
`;

const ToolSeparator = styled.div`
  width: 2px;
  height: 22px;
  margin: 0 3px;
  border-left: 1px solid #a0a0a0;
  border-right: 1px solid #fff;
`;

const Workspace = styled.div`
  display: flex;
  flex: 1;
`;

const SidePanel = styled.aside`
  display: flex;
  flex-direction: column;
  flex: none;
  width: 244px;
  padding: 4px 0 10px 6px;
  box-shadow: inset -3px 0 #f0f0f0, inset -4px 0 #fff;
`;

const DockHeader = styled.div`
  display: flex;
  gap: 2px;
  align-items: center;
  height: 12px;
  margin: 0 10px 3px 0;
`;

const DockGrip = styled.div`
  flex: 1;
  height: 6px;
  border: solid #a0a0a0;
  border-width: 1px 0;
  box-shadow: inset 0 1px #fff, 0 1px #fff;
`;

const DockButton = styled.button`
  display: flex;
  align-items: center;
  justify-content: center;
  width: 12px;
  height: 12px;
  border: 1px solid;
  border-color: #fff #808080 #808080 #fff;
  background: #f0f0f0;
`;

const TreeOuter = styled.div`
  display: flex;
  flex: 1;
  margin-right: 12px;
  padding: 4px 3px 0 5px;
  border: 1px solid #e3e3e3;
`;

const TreeInner = styled.div`
  display: flex;
  flex-direction: column;
  flex: 1;
  border: 1px solid;
  border-color: #696969 #e3e3e3 #e3e3e3 #696969;
  box-shadow: -1px -1px #a0a0a0;
`;

const FilterRow = styled.div`
  display: flex;
  align-items: center;
  height: 28px;
  padding-left: 4px;
  border-bottom: 1px solid #a0a0a0;
`;

const FilterLabel = styled.label`
  font-size: 15px;
  line-height: 20px;
`;

const FilterInput = styled.input`
  width: 122px;
  height: 18px;
  margin: 0 4px 0 8px;
  padding: 0 2px;
  border: 0;
  border-right: 1px solid #e0e0e0;
  border-bottom: 1px solid #e0e0e0;
  background: #fff;
  font: inherit;
`;

const FlatButton = styled.button`
  display: flex;
  align-items: center;
  justify-content: center;
  width: 22px;
  height: 20px;
`;

const Tree = styled.div`
  flex: 1;
  padding: 1px 0 0 3px;
  background: #fff;
`;

const TreeRow = styled.div`
  display: flex;
  align-items: center;
  height: 18px;
`;

const guideHeight = {
  v: '100%',
  t: '100%',
  e: '9px',
  '.': '0',
};

const Guide = styled.div`
  display: flex;
  align-items: center;
  flex: none;
  width: 19px;
  height: 18px;
  padding-left: 3px;
  background:
    repeating-linear-gradient(#808080 0 1px, transparent 1px 2px) 8px 0 / 1px
      ${({ $kind }) => guideHeight[$kind]} no-repeat,
    repeating-linear-gradient(90deg, #808080 0 1px, transparent 1px 2px) 8px 9px /
      ${({ $kind }) => ($kind === 't' || $kind === 'e' ? '11px' : '0')} 1px no-repeat;
`;

const ExpandBox = styled.button`
  width: 11px;
  height: 11px;
  border: 1px solid #919191;
  background:
    linear-gradient(#2b4f9c, #2b4f9c) 1px 4px / 7px 1px no-repeat,
    linear-gradient(#2b4f9c, #2b4f9c) 4px 1px / 1px ${({ $plus }) => ($plus ? '7px' : '0')} no-repeat,
    linear-gradient(#fff, #e6e6e6);
`;

const TreeLabel = styled.span`
  padding: 0 2px;
  margin-left: 3px;
  background: ${({ $selected }) => ($selected ? '#f0f0f0' : 'transparent')};
  font-size: ${({ $cjk }) => ($cjk ? '15px' : '13px')};
  line-height: 18px;
  white-space: nowrap;
`;

const HScroll = styled.div`
  display: flex;
  align-items: center;
  height: 20px;
  background: #f0f0f0;
`;

const VScroll = styled.div`
  display: flex;
  justify-content: center;
  width: 20px;
  background: #f0f0f0;
`;

const Thumb = styled.div`
  height: 6px;
  background: #858585;
`;

const SideThumb = styled(Thumb)`
  width: 73%;
  margin-left: 10%;
`;

const SideTabs = styled.div`
  display: flex;
  align-items: center;
  padding-left: 1px;
`;

const SideTab = styled.button`
  display: flex;
  align-items: center;
  gap: 6px;
  height: ${({ $active }) => ($active ? '24px' : '22px')};
  padding: 0 7px ${({ $active }) => ($active ? '0' : '1px')};
  border-right: 1px solid #e0e0e0;
  background: ${({ $active }) => ($active ? '#fafafa' : '#f0f0f0')};
  font-family: ${SONG};
  font-size: 15px;
  line-height: 20px;

  & + & {
    gap: 8px;
    padding: 0 5px 0 4px;
  }
`;

const CanvasFrame = styled.main`
  display: grid;
  grid-template-columns: 1fr 20px;
  grid-template-rows: 1fr 20px;
  flex: 1;
  min-width: 0;
  margin-right: 1px;
  margin-bottom: 5px;
  border-top: 1px solid #696969;
  border-left: 1px solid #a0a0a0;
  border-bottom: 1px solid #e3e3e3;
  border-right: 1px solid #e3e3e3;
`;

const Canvas = styled.div`
  position: relative;
  min-height: 600px;
  border-left: 1px solid #696969;
  background: #fff;
`;

const PageLine = styled.div`
  position: absolute;
  top: 0;
  bottom: 0;
  left: ${({ $x }) => $x}px;
  width: 1px;
  background: #000;
`;

const Links = styled.svg`
  position: absolute;
  top: 0;
  left: 0;
`;

const EntityBox = styled.section`
  position: absolute;
  border: 1px solid #00a9ad;
  background: linear-gradient(150deg, #fff, ${({ $to }) => $to});
  font-family: ${MONO};
  font-size: 12px;
  line-height: 15px;
`;

const EntityName = styled.div`
  height: 20px;
  padding-top: 3px;
  border-bottom: 1px solid #00a9ad;
  text-align: center;
`;

const EntityTable = styled.table`
  width: calc(100% - 8px);
  margin: 3px 4px 0;
  border-collapse: collapse;
  table-layout: fixed;
`;

const EntityCell = styled.td`
  padding: 0;
  white-space: nowrap;
  text-decoration: ${({ $key }) => ($key ? 'underline' : 'none')};
  text-underline-offset: 2px;
`;

const FloatWindow = styled.section`
  position: absolute;
  border: 1px solid #bcbcbc;
  border-radius: 6px;
  background: #f0f0f0;
  box-shadow: 0 6px 14px rgba(0, 0, 0, 0.18);
`;

const ResultWindow = styled(FloatWindow)`
  left: 465px;
  top: 339px;
  width: 400px;
`;

const PaletteWindow = styled(FloatWindow)`
  right: 41px;
  top: 3px;
  width: 75px;
  padding-bottom: 3px;
`;

const FloatTitle = styled.div`
  display: flex;
  align-items: center;
  justify-content: space-between;
  height: 37px;
  padding: 0 1px 0 9px;
  border-radius: 6px 6px 0 0;
  background: #edf4f8;
`;

const FloatCaption = styled.div`
  padding-bottom: 2px;
  font-family: ${SEGOE};
  font-size: 14px;
  line-height: 20px;
`;

const CloseSquare = styled.button`
  display: flex;
  align-items: center;
  justify-content: center;
  width: 25px;
  height: 25px;
  margin-top: 3px;
  background: #c75050;
`;

const ResultBody = styled.div`
  margin: 0 2px 2px 1px;
  border-top: 2px solid #808080;
  border-left: 1px solid #696969;
`;

const ResultArea = styled.div`
  height: 153px;
  background: #fff;
`;

const ResultTable = styled.table`
  width: 100%;
  border-collapse: collapse;
  table-layout: fixed;

  th {
    height: 24px;
    width: 100px;
    padding: 0 0 0 6px;
    border-right: 1px solid #e0e0e0;
    font-weight: normal;
    text-align: left;
  }
  th:last-child {
    width: auto;
    border-right: 0;
  }
`;

const ResultThumb = styled(Thumb)`
  width: 88%;
  margin-left: 21px;
`;

const TabStrip = styled.div`
  display: flex;
  height: 21px;
  border-top: 1px solid #000;
  background: #c6c6c6;
`;

const TabArrow = styled.button`
  display: flex;
  align-items: center;
  justify-content: center;
  flex: none;
  width: 21px;
  border-right: 1px solid #000;
  border-bottom: 1px solid #000;
  background: #f0f0f0;
  box-shadow: inset 1px 1px #fff, inset -1px -1px #808080;
`;

const slant = 'polygon(0 0, 100% 0, calc(100% - 7px) 100%, 7px 100%)';

const SlantTab = styled.button`
  position: relative;
  z-index: ${({ $active }) => ($active ? 2 : 1)};
  isolation: isolate;
  flex: none;
  height: 20px;
  padding: 0 10px;
  font-size: 14px;
  line-height: 20px;
  white-space: nowrap;

  & + & {
    margin-left: -6px;
  }
  &::before,
  &::after {
    content: '';
    position: absolute;
    inset: 0;
    z-index: -2;
    clip-path: ${slant};
    background: #555;
  }
  &::after {
    inset: 0 1px 1px;
    z-index: -1;
    background: ${({ $active }) => ($active ? '#fff' : '#f0f0f0')};
  }
`;

const PaletteGrid = styled.div`
  display: grid;
  grid-template-columns: repeat(3, 23px);
  grid-auto-rows: 22px;
  padding: 3px 2px 0;
`;

const PaletteButton = styled.button`
  display: flex;
  align-items: center;
  justify-content: center;
  ${({ $on }) =>
    $on &&
    css`
      border: 1px solid;
      border-color: #90a8bc #fff #fff #90a8bc;
      background: #cce8ff;
    `}
`;

const CanvasVThumb = styled.div`
  align-self: center;
  width: 6px;
  height: 21px;
  background: #858585;
`;

const CanvasHThumb = styled(Thumb)`
  width: 88px;
  margin-left: 782px;
`;

const Corner = styled.div`
  display: flex;
  align-items: flex-end;
  justify-content: flex-end;
  padding: 0 2px 1px 0;
`;

const OutputDock = styled.section`
  display: flex;
  padding: 3px 7px 5px 3px;
  border-top: 1px solid #000;
  box-shadow: 0 -1px #a0a0a0;
`;

const OutputGrip = styled.div`
  display: flex;
  flex-direction: column;
  align-items: flex-start;
  gap: 2px;
  width: 16px;
`;

const OutputRails = styled.div`
  flex: 1;
  width: 4px;
  margin-left: 6px;
  border: solid #a0a0a0;
  border-width: 0 1px;
  box-shadow: inset 1px 0 #fff;
`;

const OutputFrame = styled.div`
  display: grid;
  grid-template-columns: 1fr 20px;
  flex: 1;
  border: 1px solid;
  border-color: #696969 #e3e3e3 #e3e3e3 #696969;
  box-shadow: 0 -1px #a0a0a0, 1px 1px #fff;
`;

const OutputText = styled.div`
  min-height: 88px;
  padding-top: 18px;
  background: #fff;
  line-height: 16px;
`;

const OutputVThumb = styled.div`
  width: 6px;
  height: 21px;
  margin-top: 48px;
  background: #858585;
`;

const OutputBottom = styled.div`
  display: flex;
  height: 21px;
`;

const OutputTabs = styled(TabStrip)`
  width: 39%;
  border-right: 1px solid #000;
`;

const OutputHTrack = styled.div`
  display: flex;
  align-items: center;
  flex: 1;
  padding: 0 22px;
`;

const OutputHThumb = styled(Thumb)`
  flex: 1;
`;

const StatusBar = styled.footer`
  display: flex;
  align-items: center;
  justify-content: space-between;
  height: 23px;
  padding: 2px 9px 0 3px;
  border-top: 1px solid #a0a0a0;
  border-bottom: 1px solid #bdb2b8;
  box-shadow: inset 0 1px #fff;
`;

const Overlay = styled.div`
  position: absolute;
  inset: 0;
  overflow: hidden;
  pointer-events: none;
  z-index: 5;
`;

const RedBox = styled.div`
  position: absolute;
  left: ${({ $x }) => $x}px;
  top: ${({ $y }) => $y}px;
  width: ${({ $w }) => $w}px;
  height: ${({ $h }) => $h}px;
  border: 3px solid #fb3a3a;
`;

const RedNote = styled.div`
  position: absolute;
  left: ${({ $x }) => $x}px;
  top: ${({ $y }) => $y}px;
  color: #fb3a3a;
  font-family: ${SEGOE};
  font-size: 18px;
  line-height: 26px;
`;
